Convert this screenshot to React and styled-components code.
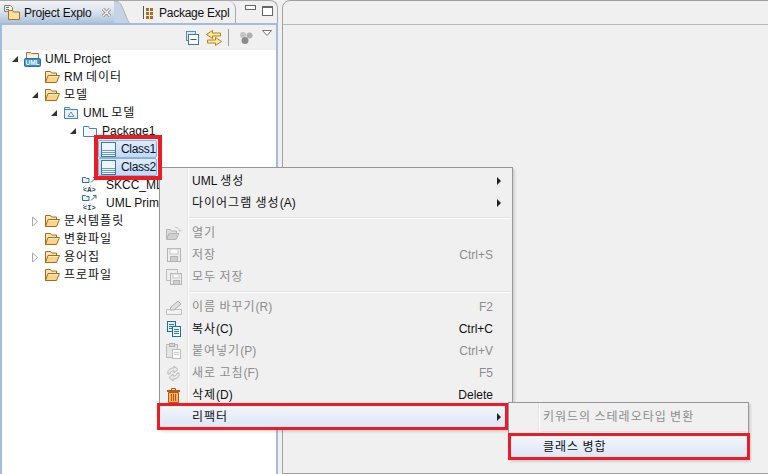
import React from 'react';
import styled, {createGlobalStyle} from 'styled-components';

const Global = createGlobalStyle`
  html, body {
    margin: 0;
    width: 768px;
    height: 474px;
    overflow: hidden;
    background: #f0f0f0;
    font-family: "Liberation Sans", "Noto Sans CJK KR", sans-serif;
    font-size: 12px;
    color: #111;
  }
`

const Workbench = styled.div`
  position: relative;
  display: flex;
  gap: 4px;
  width: 768px;
  height: 474px;
  overflow: hidden;
`

const LeftPane = styled.div`
  display: flex;
  flex-direction: column;
  width: 278px;
  flex: none;
`

const TabStrip = styled.div`
  display: flex;
  align-items: stretch;
  height: 24px;
  border-top: 1px solid #a8a8a8;
  border-right: 1px solid #a8a8a8;
  border-top-right-radius: 8px;
  box-sizing: border-box;
`

const ActiveTab = styled.div`
  display: flex;
  align-items: center;
  width: 114px;
  padding-left: 4px;
  box-sizing: border-box;
  background: linear-gradient(#f2f3f5, #dfe6ef 40%, #a9c0dc);
`

const TabCurve = styled.svg`
  display: block;
  width: 18px;
  height: 23px;
  flex: none;
`

const TabLabel = styled.span`
  margin-left: ${({$gap}) => $gap}px;
  white-space: nowrap;
  line-height: 16px;
  letter-spacing: -0.25px;
`

const CloseMark = styled.svg`
  width: 11px;
  height: 11px;
  margin-left: 10px;
  flex: none;
`

const OtherTab = styled.div`
  display: flex;
  align-items: center;
  width: 104px;
  padding-left: 11px;
  box-sizing: border-box;
  border-right: 1px solid #a8a8a8;
  border-top-right-radius: 8px;
`

const WindowButtons = styled.div`
  display: flex;
  gap: 6px;
  padding: 4px 0 0 9px;
`

const MinButton = styled.div`
  width: 9px;
  height: 3px;
  border: 1px solid #666;
  background: #fff;
`

const MaxButton = styled.div`
  width: 9px;
  height: 7px;
  margin-top: 1px;
  border: 1px solid #666;
  border-top-width: 2px;
  background: #fff;
`

const ViewBody = styled.div`
  flex: 1;
  display: flex;
  flex-direction: column;
  border-left: 2px solid #a5bcd8;
  border-right: 2px solid #a5bcd8;
  border-top: 2px solid #a5bcd8;
  margin-top: -1px;
  min-height: 0;
`

const Toolbar = styled.div`
  display: flex;
  align-items: center;
  justify-content: flex-end;
  height: 25px;
  padding-right: 4px;
  background: #f0f0f0;
  flex: none;
`

const ToolIcon = styled.svg`
  display: block;
  flex: none;
  margin-left: ${({$gap}) => $gap}px;
  margin-top: ${({$top}) => $top || 0}px;
`

const ToolSep = styled.div`
  width: 1px;
  height: 17px;
  margin-left: 6px;
  background: #9a9a9a;
`

const Tree = styled.div`
  flex: 1;
  background: #fff;
  overflow: hidden;
`

const Row = styled.div`
  display: flex;
  align-items: center;
  height: 18px;
  padding-left: ${({$level}) => 3 + 19 * $level + ($level > 0 ? 1 : 0)}px;
  white-space: nowrap;
`

const ExpanderSlot = styled.span`
  display: flex;
  align-items: center;
  justify-content: center;
  width: 19px;
  flex: none;
`

const RowLabel = styled.span`
  margin-left: ${({$gap}) => $gap}px;
  line-height: 16px;
`

const SelectedItem = styled.span`
  display: flex;
  align-items: center;
  height: 16px;
  width: 55px;
  margin-left: -3px;
  padding-left: 2px;
  border: 1px solid #8fb2dc;
  border-radius: 2px;
  letter-spacing: -0.3px;
  background: linear-gradient(#dcebfc, #c1dbfc);
`

const RightPane = styled.div`
  flex: 1;
  box-sizing: border-box;
  height: 474px;
  margin-right: -4px;
  border: 1px solid #a0a0a0;
  border-top-left-radius: 8px;
  background: #f0f0f0;
`

const RightTabs = styled.div`
  height: 23px;
  border-bottom: 1px solid #b8b8b8;
`

const Menu = styled.div`
  position: absolute;
  left: ${({$x}) => $x}px;
  top: ${({$y}) => $y}px;
  width: ${({$w}) => $w}px;
  box-sizing: border-box;
  padding: ${({$top}) => $top}px 1px 1px;
  border: 1px solid #979797;
  background:
    linear-gradient(90deg, transparent ${({$gutter}) => $gutter}px, #e2e3e3 ${({$gutter}) => $gutter}px,
      #e2e3e3 ${({$gutter}) => $gutter + 1}px, #fff ${({$gutter}) => $gutter + 1}px,
      #fff ${({$gutter}) => $gutter + 2}px, transparent ${({$gutter}) => $gutter + 2}px),
    #f0f0f0;
  box-shadow: 2px 2px 2px rgba(0, 0, 0, 0.12);
`

const MenuRow = styled.div`
  display: flex;
  align-items: center;
  height: 22px;
  color: ${({$disabled}) => ($disabled ? '#8c8c8c' : '#111')};
  background: ${({$hot}) => ($hot ? 'linear-gradient(#f2f5fb, #dde6f5)' : 'transparent')};
`

const MenuIconSlot = styled.span`
  display: flex;
  align-items: center;
  justify-content: center;
  width: ${({$w}) => $w}px;
  flex: none;
  padding-right: 6px;
  box-sizing: border-box;
`

const MenuLabel = styled.span`
  flex: 1;
  white-space: nowrap;
  line-height: 16px;
`

const Shortcut = styled.span`
  width: 80px;
  text-align: right;
  white-space: nowrap;
  color: inherit;
`

const ArrowSlot = styled.span`
  display: flex;
  align-items: center;
  justify-content: flex-end;
  width: 18px;
  padding-right: 10px;
  box-sizing: border-box;
  flex: none;
`

const Arrow = styled.span`
  width: 0;
  height: 0;
  border-left: 4px solid #222;
  border-top: 4px solid transparent;
  border-bottom: 4px solid transparent;
`

const MenuSep = styled.div`
  height: 2px;
  margin: 3px 0 3px ${({$gutter}) => $gutter}px;
  background: linear-gradient(#e0e0e0 50%, #fff 50%);
`

const Hangul = styled.span`
  letter-spacing: 1px;
`

const RedBox = styled.div`
  position: absolute;
  left: ${({$x}) => $x}px;
  top: ${({$y}) => $y}px;
  width: ${({$w}) => $w}px;
  height: ${({$h}) => $h}px;
  box-sizing: border-box;
  border: ${({$t}) => $t}px solid #ed1c24;
  pointer-events: none;
`

// hangul is set on a 12px cell in the reference, noto's is narrower
const Txt = ({children}) => children.split(/([가-힣]+)/).map((part, i) =>
    /[가-힣]/.test(part) ? <Hangul key={i}>{part}</Hangul> : part
)

const FolderOpen = ({size = 16}) => (
    <svg width={size} height={14} viewBox="0 0 16 14" style={{display: 'block', flex: 'none'}}>
        <path d="M1.5 12.5V1.500h5l1 1.500h5v3" fill="#fbe6b4" stroke="#a86a1e"/>
        <path d="M1.5 12.5l2.500-7h11.500l-3 7z" fill="#fbd488" stroke="#a86a1e"/>
        <path d="M4.700 6.500h9.500" stroke="#fff3d0"/>
    </svg>
)

const UmlProject = () => (
    <svg width="17" height="16" viewBox="0 0 17 16" style={{display: 'block', flex: 'none'}}>
        <path d="M2.500 7V1.500h4l1 1h7V7" fill="#f6e3b0" stroke="#8a7a55"/>
        <path d="M3 4h11v4H3z" fill="#fff7df"/>
        <rect x="0.500" y="7.500" width="16" height="8" rx="1" fill="#3d8fc4" stroke="#2a6f9f"/>
        <text x="8.500" y="14" textAnchor="middle" fontFamily="Liberation Sans" fontWeight="700" fontSize="6.500" fill="#fff">UML</text>
    </svg>
)

const ModelFolder = () => (
    <svg width="16" height="14" viewBox="0 0 16 14" style={{display: 'block', flex: 'none'}}>
        <path d="M1.5 12.5V1.5h5l1 2h7v9z" fill="#e9f3fb" stroke="#4b83b0"/>
        <path d="M8 6l3 4.5H5z" fill="none" stroke="#6a8fa8"/>
        <path d="M2 3.5h5" stroke="#4b83b0"/>
    </svg>
)

const PackageFolder = () => (
    <svg width="16" height="12" viewBox="0 0 16 12" style={{display: 'block', flex: 'none'}}>
        <path d="M1.5 11.5V1.5h5l1 2h7v8z" fill="#f3f9fe" stroke="#4b83b0"/>
    </svg>
)

const ClassIcon = () => (
    <svg width="15" height="15" viewBox="0 0 15 15" style={{display: 'block', flex: 'none'}}>
        <rect x="0.5" y="0.5" width="14" height="14" fill="#eef6fd" stroke="#3f79a8"/>
        <path d="M1 8.5h13M1 10.5h13M1 12.5h13" stroke="#6b9cc3"/>
    </svg>
)

const DiagramIcon = ({letter}) => (
    <svg width="20" height="18" viewBox="0 0 20 18" style={{display: 'block', flex: 'none'}}>
        <path d="M0.500 6.500V1.500h3l1 1h2.500v4z" fill="#eaf3fb" stroke="#2f6f9f"/>
        <path d="M9 6.500l5-5m0 0h-3m3 0v3" fill="none" stroke="#2f6f9f"/>
        <path d="M1 12l3-2.500M8 9.500l1 1" stroke="#2f6f9f" strokeDasharray="1 1"/>
        <text x="1" y="16" fontFamily="Liberation Mono" fontWeight="700" fontSize="7" fill="#1d3f5e">&lt;{letter}&gt;</text>
    </svg>
)

const TriFilled = () => (
    <svg width="8" height="8" viewBox="0 0 8 8" style={{display: 'block'}}>
        <path d="M7 1v6H1z" fill="#333"/>
    </svg>
)

const TriHollow = () => (
    <svg width="8" height="11" viewBox="0 0 8 11" style={{display: 'block'}}>
        <path d="M1.500 1l5 4.500-5 4.500z" fill="#fff" stroke="#a8a8a8"/>
    </svg>
)

const GrayOpen = () => (
    <svg width="18" height="15" viewBox="0 0 18 15" style={{display: 'block'}}>
        <path d="M1.500 13.500V3.500h4l1 1.500h5v2" fill="#dcdcdc" stroke="#b4b4b4"/>
        <path d="M1.500 13.500l2.500-6h10l-3 6z" fill="#cfcfcf" stroke="#b4b4b4"/>
        <path d="M10 1.500c3 0 4.500 1 5 3.500M13.500 4l1.500 1.500 1.500-1.500" fill="none" stroke="#c4c4c4"/>
    </svg>
)

const GraySave = () => (
    <svg width="14" height="14" viewBox="0 0 14 14" style={{display: 'block'}}>
        <rect x="0.500" y="0.500" width="13" height="13" fill="#eee" stroke="#b4b4b4"/>
        <rect x="3" y="1" width="8" height="5" fill="#fafafa" stroke="#c8c8c8"/>
        <rect x="3.500" y="8.500" width="7" height="5" fill="#cfcfcf" stroke="#b4b4b4"/>
    </svg>
)

const GraySaveAll = () => (
    <svg width="16" height="16" viewBox="0 0 16 16" style={{display: 'block'}}>
        <rect x="0.500" y="0.500" width="11" height="11" fill="#eee" stroke="#bcbcbc"/>
        <rect x="4.500" y="4.500" width="11" height="11" fill="#eee" stroke="#b4b4b4"/>
        <rect x="7" y="5" width="6" height="4" fill="#fafafa" stroke="#c8c8c8"/>
        <rect x="7.500" y="11.500" width="6" height="4" fill="#cfcfcf" stroke="#b4b4b4"/>
    </svg>
)

const GrayRename = () => (
    <svg width="16" height="15" viewBox="0 0 16 15" style={{display: 'block'}}>
        <path d="M0.500 9.500h15v5h-15z" fill="#f2f2f2" stroke="#c0c0c0"/>
        <path d="M4 10l1-3 7-6 3 3-7 6z" fill="#dedede" stroke="#b0b0b0"/>
    </svg>
)

const CopyIcon = () => (
    <svg width="14" height="16" viewBox="0 0 14 16" style={{display: 'block'}}>
        <rect x="0.500" y="0.500" width="8" height="10" fill="#e4f1fb" stroke="#1e6ea8"/>
        <path d="M2 3.500h5M2 5.500h5M2 7.500h3" stroke="#2f7fb8"/>
        <rect x="5.500" y="5.500" width="8" height="10" fill="#f2f9ff" stroke="#1e6ea8"/>
        <path d="M7 8.500h5M7 10.500h5M7 12.500h5" stroke="#2f7fb8"/>
    </svg>
)

const GrayPaste = () => (
    <svg width="15" height="16" viewBox="0 0 15 16" style={{display: 'block'}}>
        <rect x="0.500" y="1.500" width="11" height="13" fill="#e4e4e4" stroke="#bcbcbc"/>
        <rect x="3.500" y="0.500" width="5" height="3" fill="#d4d4d4" stroke="#b0b0b0"/>
        <rect x="6.500" y="6.500" width="8" height="9" fill="#fafafa" stroke="#bcbcbc"/>
        <path d="M8 9.500h5M8 11.500h5" stroke="#ccc"/>
    </svg>
)

const GrayRefresh = () => (
    <svg width="15" height="17" viewBox="0 0 15 17" style={{display: 'block'}}>
        <path d="M2 9c-1-4 2-6 6-6V1l4 3.500L8 8V6C5.500 6 4 7 4 9z" fill="#e8e8e8" stroke="#b8b8b8"/>
        <path d="M13 8c1 4-2 6-6 6v2l-4-3.500L7 9v2c2.500 0 4-1 4-3z" fill="#e8e8e8" stroke="#b8b8b8"/>
    </svg>
)

const TrashIcon = () => (
    <svg width="13" height="15" viewBox="0 0 13 15" style={{display: 'block'}}>
        <path d="M0 3h13" stroke="#b85a12" strokeWidth="2"/>
        <path d="M4.500 2V0.500h4V2" fill="none" stroke="#b85a12"/>
        <path d="M1.500 4.500h10v10h-10z" fill="#f5b36a" stroke="#b85a12"/>
        <path d="M4.500 6v7M6.500 6v7M8.500 6v7" stroke="#b85a12"/>
    </svg>
)

const tree = [
    {level: 0, expander: 'open', icon: <UmlProject/>, gap: 4, label: 'UML Project'},
    {level: 1, icon: <FolderOpen/>, gap: 4, label: 'RM 데이터'},
    {level: 1, expander: 'open', icon: <FolderOpen/>, gap: 4, label: '모델'},
    {level: 2, expander: 'open', icon: <ModelFolder/>, gap: 4, label: 'UML 모델'},
    {level: 3, expander: 'open', icon: <PackageFolder/>, gap: 4, label: 'Package1'},
    {level: 4, selected: true, label: 'Class1'},
    {level: 4, selected: true, label: 'Class2'},
    {level: 3, icon: <DiagramIcon letter="A"/>, gap: 4, label: 'SKCC_ML'},
    {level: 3, icon: <DiagramIcon letter="I"/>, gap: 4, label: 'UML Primitives'},
    {level: 1, expander: 'closed', icon: <FolderOpen/>, gap: 4, label: '문서템플릿'},
    {level: 1, icon: <FolderOpen/>, gap: 4, label: '변환파일'},
    {level: 1, expander: 'closed', icon: <FolderOpen/>, gap: 4, label: '용어집'},
    {level: 1, icon: <FolderOpen/>, gap: 4, label: '프로파일'},
]

const menuItems = [
    {label: 'UML 생성', arrow: true},
    {label: '다이어그램 생성(A)', arrow: true},
    {sep: true},
    {label: '열기', disabled: true, icon: <GrayOpen/>},
    {label: '저장', disabled: true, icon: <GraySave/>, shortcut: 'Ctrl+S'},
    {label: '모두 저장', disabled: true, icon: <GraySaveAll/>},
    {sep: true},
    {label: '이름 바꾸기(R)', disabled: true, icon: <GrayRename/>, shortcut: 'F2'},
    {label: '복사(C)', icon: <CopyIcon/>, shortcut: 'Ctrl+C'},
    {label: '붙여넣기(P)', disabled: true, icon: <GrayPaste/>, shortcut: 'Ctrl+V'},
    {label: '새로 고침(F)', disabled: true, icon: <GrayRefresh/>, shortcut: 'F5'},
    {label: '삭제(D)', icon: <TrashIcon/>, shortcut: 'Delete'},
    {label: '리팩터', arrow: true, hot: true},
]

function TreeRow({item}) {
    return (
        <Row $level={item.level}>
            <ExpanderSlot>
                {item.expander === 'open' && <TriFilled/>}
                {item.expander === 'closed' && <TriHollow/>}
            </ExpanderSlot>
            {item.selected ? (
                <SelectedItem>
                    <ClassIcon/>
                    <RowLabel $gap={5}>{item.label}</RowLabel>
                </SelectedItem>
            ) : (
                <>
                    {item.icon}
                    <RowLabel $gap={item.gap}><Txt>{item.label}</Txt></RowLabel>
                </>
            )}
        </Row>
    )
}

function App() {
    return (
        <Workbench>
            <Global/>
            <LeftPane>
                <TabStrip>
                    <ActiveTab>
                        <svg width="17" height="16" viewBox="0 0 17 16" style={{flex: 'none'}}>
                            <path d="M0.500 0.500h6l2 2v4h-8z" fill="#f4f4f4" stroke="#8a7a55"/>
                            <path d="M2 2.500h3M2 4.500h3" stroke="#3f79a8"/>
                            <path d="M4.500 14.500v-9h4l1 1.500h6v7.500z" fill="#fbe0a0" stroke="#a8712c"/>
                        </svg>
                        <TabLabel $gap={3}>Project Explo</TabLabel>
                        <CloseMark viewBox="0 0 11 11">
                            <path d="M2 2l7 7M9 2l-7 7" stroke="#7a7a7a" strokeWidth="3"/>
                            <path d="M2 2l7 7M9 2l-7 7" stroke="#fafafa" strokeWidth="1.500"/>
                        </CloseMark>
                    </ActiveTab>
                    <TabCurve viewBox="0 0 26 23" preserveAspectRatio="none">
                        <path d="M0 0C9 0 11 4 15 11 19 18 21 23 26 23H0z" fill="#c5d3e6"/>
                        <path d="M0 0C9 0 11 4 15 11 19 18 21 23 26 23" fill="none" stroke="#a8a8a8"/>
                    </TabCurve>
                    <OtherTab>
                        <svg width="10" height="13" viewBox="0 0 10 13" style={{flex: 'none'}}>
                            <path d="M0.500 0v13" stroke="#555"/>
                            <path d="M3 2h3v3H3zM7 2h3v3H7zM3 6h3v3H3zM7 6h3v3H7zM3 10h3v3H3zM7 10h3v3H7z" fill="#b5691c"/>
                        </svg>
                        <TabLabel $gap={6}>Package Expl</TabLabel>
                    </OtherTab>
                    <WindowButtons>
                        <MinButton/>
                        <MaxButton/>
                    </WindowButtons>
                </TabStrip>
                <ViewBody>
                    <Toolbar>
                        <ToolIcon $gap={0} width="13" height="14" viewBox="0 0 13 14">
                            <rect x="0.500" y="0.500" width="9" height="9" fill="#dce9f4" stroke="#5b8db5"/>
                            <rect x="2.500" y="3.500" width="10" height="10" fill="#fff" stroke="#3f79a8"/>
                            <path d="M4.500 8.500h6" stroke="#2a5f8a"/>
                        </ToolIcon>
                        <ToolIcon $gap={7} width="16" height="16" viewBox="0 0 16 16">
                            <path d="M6.500 0.500L0.500 4.500l6 4V6h8V3h-8z" fill="#fbe8a8" stroke="#b8860b"/>
                            <path d="M9.500 7.500l6 4-6 4V13h-8v-3h8z" fill="#fbe8a8" stroke="#b8860b"/>
                        </ToolIcon>
                        <ToolSep/>
                        <ToolIcon $gap={10} width="14" height="13" viewBox="0 0 14 13">
                            <circle cx="4" cy="4" r="3" fill="#c4c4c4"/>
                            <circle cx="10.500" cy="4.500" r="3" fill="#b0b0b0"/>
                            <circle cx="6" cy="9.500" r="3.500" fill="#8c8c8c"/>
                        </ToolIcon>
                        <ToolIcon $gap={9} $top={-9} width="10" height="6" viewBox="0 0 10 6">
                            <path d="M0.500 0.500h9L5 5.500z" fill="#fff" stroke="#777"/>
                        </ToolIcon>
                    </Toolbar>
                    <Tree>
                        {tree.map((item) => (
                            <TreeRow key={item.label} item={item}/>
                        ))}
                    </Tree>
                </ViewBody>
            </LeftPane>
            <RightPane>
                <RightTabs/>
            </RightPane>

            <Menu $x={159} $y={167} $w={354} $gutter={27} $top={2}>
                {menuItems.map((item, i) => item.sep ? (
                    <MenuSep key={i} $gutter={29}/>
                ) : (
                    <MenuRow key={item.label} $disabled={item.disabled} $hot={item.hot}>
                        <MenuIconSlot $w={31}>{item.icon}</MenuIconSlot>
                        <MenuLabel><Txt>{item.label}</Txt></MenuLabel>
                        {item.shortcut && <Shortcut>{item.shortcut}</Shortcut>}
                        <ArrowSlot>{item.arrow && <Arrow/>}</ArrowSlot>
                    </MenuRow>
                ))}
            </Menu>
            <Menu $x={508} $y={402} $w={241} $gutter={29} $top={3}>
                <MenuRow $disabled>
                    <MenuIconSlot $w={33}/>
                    <MenuLabel><Txt>키워드의 스테레오타입 변환</Txt></MenuLabel>
                </MenuRow>
                <MenuSep $gutter={31}/>
                <MenuRow $hot>
                    <MenuIconSlot $w={33}/>
                    <MenuLabel><Txt>클래스 병합</Txt></MenuLabel>
                </MenuRow>
            </Menu>

            <RedBox $x={94} $y={135} $w={68} $h={45} $t={4}/>
            <RedBox $x={157} $y={403} $w={351} $h={27} $t={3}/>
            <RedBox $x={508} $y={433} $w={242} $h={27} $t={3}/>
        </Workbench>
    );
}

export default App;
